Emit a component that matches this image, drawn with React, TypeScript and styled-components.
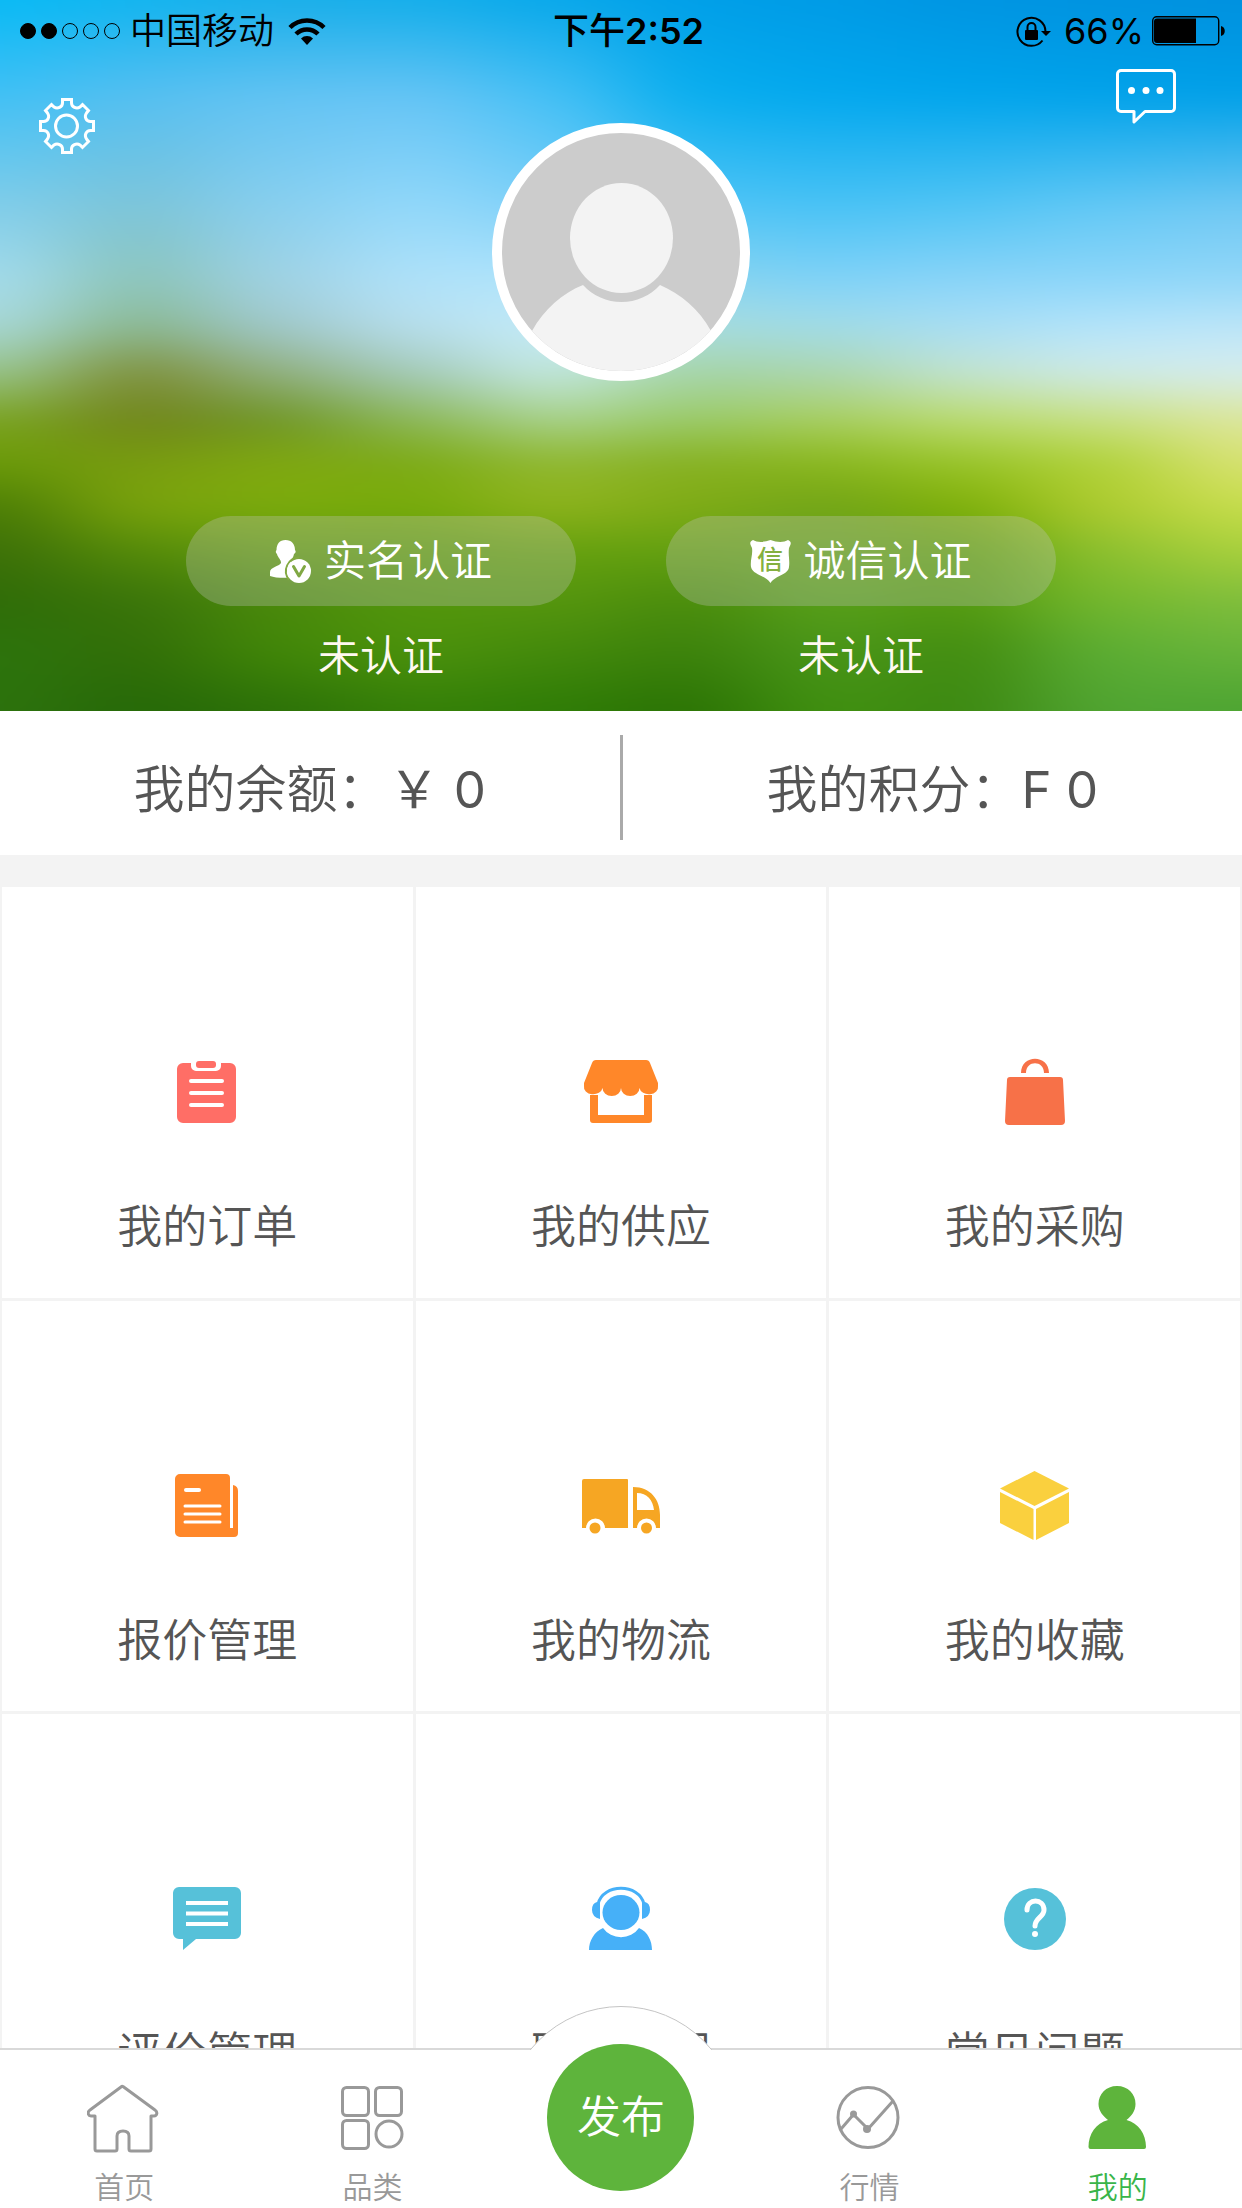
import React from "react";
import styled, { createGlobalStyle } from "styled-components";

const GlobalStyle = createGlobalStyle`
  *, *::before, *::after { box-sizing: border-box; }
  html, body, #root { height: 100%; }
  body {
    margin: 0;
    background: #fff;
    font-family: Inter, "Noto Sans CJK SC", sans-serif;
    color: #555;
  }
  button { border: 0; padding: 0; background: none; font: inherit; color: inherit; cursor: pointer; }
  a { color: inherit; text-decoration: none; }
  svg { display: block; }
`;

const Screen = styled.div`
  height: 100%;
  display: flex;
  flex-direction: column;
`;

const Content = styled.main`
  flex: 1;
  min-height: 0;
  overflow-y: auto;
  scrollbar-width: none;
  background: #f3f3f3;
`;

/* ---------- hero ---------- */

const Hero = styled.header`
  position: relative;
  isolation: isolate;
  overflow: hidden;
  color: #fff;
  padding-bottom: 25px;
`;

const Backdrop = styled.svg`
  position: absolute;
  inset: 0;
  width: 100%;
  height: 100%;
  z-index: -1;
`;

const StatusBar = styled.div`
  display: grid;
  grid-template-columns: 1fr auto 1fr;
  align-items: center;
  height: 60px;
  padding: 2px 17px 0 20px;
  color: #000;
  font-size: 36px;
  line-height: 58px;
`;

const StatusGroup = styled.div<{ $end?: boolean }>`
  display: flex;
  align-items: center;
  justify-content: ${(p) => (p.$end ? "flex-end" : "flex-start")};
`;

const Signal = styled.div`
  display: flex;
  gap: 5px;
  margin-right: 10px;
`;

const SignalDot = styled.span<{ $on: boolean }>`
  width: 16px;
  height: 16px;
  border-radius: 50%;
  border: 1px solid #000;
  background: ${(p) => (p.$on ? "#000" : "transparent")};
`;

const Carrier = styled.span`
  margin-right: 14px;
  font-weight: 350;
`;

const Clock = styled.time`
  padding-left: 12px;
  font-weight: 500;
`;

const ClockDigits = styled.span`
  font-weight: 600;
`;

const Percent = styled.span`
  margin: 0 8px 0 13px;
`;

const TopRow = styled.div`
  display: grid;
  grid-template-columns: 1fr auto 1fr;
  align-items: start;
  padding: 9px 66px 0 39px;
`;

const IconButton = styled.button<{ $end?: boolean }>`
  justify-self: ${(p) => (p.$end ? "end" : "start")};
  margin-top: ${(p) => (p.$end ? 0 : 29)}px;
`;

const Avatar = styled.div`
  width: 258px;
  height: 258px;
  margin: 54px 0 0 27px;
  border: 10px solid #fff;
  border-radius: 50%;
  overflow: hidden;
  background: #ccc;
`;

const Badges = styled.div`
  display: flex;
  justify-content: center;
  gap: 90px;
  margin-top: 135px;
`;

const BadgeColumn = styled.div`
  display: flex;
  flex-direction: column;
  align-items: center;
  width: 390px;
  font-size: 42px;
  line-height: 60px;
  font-weight: 350;
`;

const BadgeButton = styled.button`
  display: flex;
  align-items: center;
  justify-content: center;
  gap: 12px;
  width: 100%;
  height: 90px;
  margin-bottom: 20px;
  border-radius: 45px;
  background: rgba(200, 200, 200, 0.3);
`;

const BadgeState = styled.span`
  color: #fff9f0;
`;

/* ---------- balance ---------- */

const Balance = styled.section`
  display: flex;
  height: 144px;
  padding: 24px 0 15px;
  margin-bottom: 32px;
  background: #fff;
`;

const BalanceItem = styled.div`
  flex: 1;
  display: flex;
  align-items: center;
  justify-content: center;
  padding-bottom: 4px;
  font-size: 51px;
  font-weight: 350;
`;

const Amount = styled.span`
  font-weight: 400;
`;

const Divider = styled.div`
  width: 3px;
  background: #aaa;
`;

/* ---------- menu grid ---------- */

const Menu = styled.nav`
  display: grid;
  grid-template-columns: repeat(3, 1fr);
  gap: 3px;
  padding: 0 2px 3px;
`;

const MenuItem = styled.a`
  display: flex;
  flex-direction: column;
  align-items: center;
  gap: 58px;
  aspect-ratio: 1;
  padding-top: 160px;
  background: #fff;
  font-size: 45px;
  line-height: 64px;
  font-weight: 350;
`;

/* ---------- tab bar ---------- */

const TabBar = styled.nav`
  position: relative;
  display: grid;
  grid-template-columns: repeat(5, 1fr);
  height: 160px;
  border-top: 2px solid #d9d9d9;
  background: #fff;
`;

const Tab = styled.a<{ $active?: boolean }>`
  display: flex;
  flex-direction: column;
  align-items: center;
  gap: 11px;
  padding-top: 32px;
  font-size: 30px;
  line-height: 44px;
  font-weight: 350;
  color: ${(p) => (p.$active ? "#39b549" : "#999")};
`;

const BumpClip = styled.div`
  position: absolute;
  left: 50%;
  bottom: 100%;
  width: 234px;
  height: 44px;
  margin-left: -117px;
  overflow: hidden;
`;

const Bump = styled.div`
  width: 234px;
  height: 234px;
  border: 1px solid #c4c4c4;
  border-radius: 50%;
  background: #fff;
`;

const PublishSlot = styled.div`
  display: flex;
  justify-content: center;
`;

const Publish = styled.button`
  position: relative;
  z-index: 1;
  width: 147px;
  height: 147px;
  margin-top: -6px;
  padding-bottom: 8px;
  border-radius: 50%;
  background: #5eb43c;
  color: #fff;
  font-size: 44px;
  font-weight: 350;
`;

/* ---------- backdrop data: one vertical colour ramp for each column ---------- */

const stopsY = [0, 95, 205, 280, 326, 372, 420, 462, 505, 552, 600, 650, 711];

const ramps = [
  "08baf5 40c0f5 80cdea a5dcec a8d8d8 98c48c 7aa31e 6c9c08 4c7e06 3c7008 2f6c08 2c740c 2d720d",
  "12b4ef 55bff1 7cc4d8 8cc4b8 8ab890 7f8f3a 70841a 789c10 7ca40c 548a0a 3a740a 326e08 256808",
  "19aee9 62c3f3 88cfef a0d2e4 a0c8cc 92b080 6d9424 80a810 7cac0c 5f9a0c 4a880c 428808 2b7008",
  "14aeea 66c4f5 92d8fa b0e2fa b8dfee a4cabc 8cb858 7caa14 78ac0a 5e9c0c 52960c 4c920c 347f08",
  "08a8ea 45c0f5 7fd0f8 b0e4fa c5ecfa c5e9e4 a8d28c 90b830 90b41c 64a00e 56960e 448a0c 2e7c06",
  "009fe8 08aeee 50c4f6 88d4ee a8dce0 a5d4a8 9acb68 86b020 80ac16 62a010 4a8c0c 3c820c 2a7204",
  "009be6 02a8ee 48c2f5 80d2f8 a2dce8 acd6b0 a9cf60 8ab81c 72a418 66a41a 58a01a 4a961a 409010",
  "0095e2 00a5ec 50c4f4 8ad4f8 a8def5 c4e4d4 bcdc70 98c428 80b008 5ea00a 549a10 428c10 3c8812",
  "0093e0 00a2ea 62c8f5 8dd6f9 b4e4fb d0ebea c8e084 b0d238 b0cc30 8cc030 74b82e 5cae34 50a432",
  "0091df 00a0e8 70c8f3 92d7f8 bce5f8 d6edf0 dde69a d8e272 c8de4c a8d03c 80be3c 68b43a 4ca432",
].map((r) => r.split(" "));

const HeroBackdrop = () => (
  <Backdrop viewBox="0 0 1242 711" preserveAspectRatio="none" aria-hidden="true">
    <defs>
      {ramps.map((ramp, i) => (
        <linearGradient key={i} id={`ramp${i}`} gradientUnits="userSpaceOnUse" x1="0" y1="0" x2="0" y2="711">
          {ramp.map((c, j) => (
            <stop key={j} offset={stopsY[j] / 711} stopColor={`#${c}`} />
          ))}
        </linearGradient>
      ))}
      <filter id="soften" filterUnits="userSpaceOnUse" x="-400" y="-80" width="2042" height="871" colorInterpolationFilters="sRGB">
        <feGaussianBlur stdDeviation="52 16" />
      </filter>
    </defs>
    <g filter="url(#soften)">
      {ramps.map((_, i) => {
        const last = ramps.length - 1;
        const x = i === 0 ? -400 : i * 138 - 69;
        const end = i === last ? 1642 : i * 138 + 70;
        return <rect key={i} x={x} y="-80" width={end - x} height="871" fill={`url(#ramp${i})`} />;
      })}
    </g>
  </Backdrop>
);

/* ---------- icons ---------- */

const WifiIcon = () => (
  <svg width="38" height="28" viewBox="0 0 38 28" aria-hidden="true">
    <path d="M2 10.500a24 24 0 0 1 34 0" fill="none" stroke="#000" strokeWidth="4.500" />
    <path d="M8 17a15.500 15.500 0 0 1 22 0" fill="none" stroke="#000" strokeWidth="4.500" />
    <path d="M19 28l-6-6.500a8.500 8.500 0 0 1 12 0z" />
  </svg>
);

const RotationLockIcon = () => (
  <svg width="35" height="31" viewBox="0 0 35 31" aria-hidden="true">
    <path d="M26.500 24.500A14 14 0 1 1 29.500 15.500" fill="none" stroke="#000" strokeWidth="2" />
    <path d="M25 15h10l-5 5z" />
    <rect x="9" y="14" width="13" height="10" rx="1" />
    <path d="M11.500 14v-3a4 4 0 0 1 8 0v3" fill="none" stroke="#000" strokeWidth="2" />
  </svg>
);

const BatteryIcon = () => (
  <svg width="73" height="30" viewBox="0 0 73 30" aria-hidden="true">
    <rect x="0.700" y="0.700" width="66" height="28" rx="4" fill="none" stroke="#000" strokeWidth="1.400" />
    <path d="M5 2.500h39v24.500H5a3 3 0 0 1-3-3v-18.500a3 3 0 0 1 3-3z" />
    <path d="M69 10c5 1 5 9 0 10z" />
  </svg>
);

const GearIcon = () => (
  <svg width="56" height="56" viewBox="0 0 56 56" fill="none" stroke="#fff" strokeWidth="3" aria-hidden="true">
    <circle cx="27.500" cy="28" r="11" />
    <path d="M23.500 1.500h9v3.500c0 4 5 6.500 8.500 4l2.500-2.500 6 6-2 2.500c-2.500 3.500-.5 8.500 4 8.500h3v9h-3c-4.500 0-6.500 5-4 8.500l2 2.500-6 6-2.500-2.500c-3.500-2.500-8.500 0-8.500 4v3.500h-9v-3.500c0-4-5-6.500-8.500-4l-2.500 2.500-6-6 2-2.500c2.500-3.500.5-8.500-4-8.500h-3v-9h3c4.500 0 6.500-5 4-8.500l-2-2.500 6-6 2.500 2.500c3.500 2.500 8.500 0 8.500-4z" />
  </svg>
);

const MessageIcon = () => (
  <svg width="60" height="55" viewBox="0 0 60 55" aria-hidden="true">
    <path d="M5 1.500h50a3.500 3.500 0 0 1 3.500 3.500v34a3.500 3.500 0 0 1-3.500 3.500H29l-11 10.500v-10.500H5a3.500 3.500 0 0 1-3.500-3.500V5a3.500 3.500 0 0 1 3.500-3.500z" fill="none" stroke="#fff" strokeWidth="3" strokeLinejoin="round" />
    <g fill="#fff"><circle cx="15.500" cy="21.500" r="3.500" /><circle cx="30" cy="21.500" r="3.500" /><circle cx="44" cy="21.500" r="3.500" /></g>
  </svg>
);

const AvatarFigure = () => (
  <svg width="238" height="238" viewBox="0 0 238 238" role="img" aria-label="头像">
    <path d="M30 198C42 176 61 160 81 152a52 52 0 0 0 77 0c21 9 39 24 51 46v40H30z" fill="#f3f3f3" />
    <ellipse cx="119.500" cy="105" rx="51.500" ry="55" fill="#f3f3f3" />
  </svg>
);

const VerifiedUserIcon = () => (
  <svg width="42" height="43" viewBox="0 0 42 43" aria-hidden="true">
    <path d="M15.500 0c6 0 9.500 4 9.500 10 1 1 1 3-1 4-.5 3-2.500 5.500-3 7-.5 4 .5 6 3 7v9.500C14 38 5 38 0 36v-4c0-5 9-5.500 11-9 .5-3-3.500-6-4-9-1.500-1-1.500-3-.5-4C6.500 4 9.500 0 15.500 0z" fill="#fff" />
    <path d="M29 17.500a13.500 13.500 0 0 0-10 22" fill="none" stroke="#84aa42" strokeWidth="2" />
    <circle cx="29" cy="31" r="12" fill="#fff" />
    <path d="M23.500 26.500l5.500 9.500 5.500-9.500" fill="none" stroke="#80a843" strokeWidth="3" strokeLinecap="round" strokeLinejoin="round" />
  </svg>
);

const Seal = styled.text`
  font-family: "Noto Sans CJK SC", sans-serif;
  font-size: 26px;
  font-weight: 500;
`;

const ShieldIcon = () => (
  <svg width="41" height="43" viewBox="0 0 41 43" aria-hidden="true">
    <path d="M3 0c4 2.500 11 2.500 17.500 0C27 2.500 34 2.500 38 0c4 2 3 4 1 8-1 7 1 12 0 19-1 8-13 8-18.500 16C15 35 3 35 1 27c-1-7 2-12 1-19C0 4-1 2 3 0z" fill="#fff" />
    <Seal x="20" y="29" textAnchor="middle" fill="#84b03f">信</Seal>
  </svg>
);

const MenuSvg = ({ color, children }: { color: string; children: React.ReactNode }) => (
  <svg width="90" height="90" viewBox="0 0 90 90" fill={color} aria-hidden="true">
    {children}
  </svg>
);

const OrderIcon = () => (
  <MenuSvg color="#ff6e66">
    <path d="M21 16h8v3a5 5 0 0 0 5 5h20a5 5 0 0 0 5-5v-3h9a6 6 0 0 1 6 6v48a6 6 0 0 1-6 6H21a6 6 0 0 1-6-6V22a6 6 0 0 1 6-6z" />
    <rect x="34" y="14" width="20" height="7" rx="3" />
    <path d="M29 34h31M29 46h31M29 58h31" stroke="#fff" strokeWidth="4" strokeLinecap="round" />
  </MenuSvg>
);

const ShopIcon = () => (
  <MenuSvg color="#ff8729">
    <path d="M20 13h50q3 0 4 3l8 20v3a9 7 0 0 1-18.500 2 9.250 8 0 0 1-18.500 0 9.250 8 0 0 1-18.500 0 9 7 0 0 1-18.500-2v-3l8-20q1-3 4-3z" />
    <path d="M14 48h8v20h46V48h8v25a3 3 0 0 1-3 3H17a3 3 0 0 1-3-3z" />
  </MenuSvg>
);

const BagIcon = () => (
  <MenuSvg color="#f77148">
    <path d="M20 30h50a3 3 0 0 1 3 3l2 41q0 4-4 4H19q-4 0-4-4l2-41a3 3 0 0 1 3-3z" />
    <path d="M31 26C31 7 59 7 59 26h-5c0-13-18-13-18 0z" />
  </MenuSvg>
);

const QuoteIcon = () => (
  <MenuSvg color="#ff8729">
    <path d="M18 13h46a4 4 0 0 1 4 4v50h3V24q5 1 5 6v42a4 4 0 0 1-4 4H18a5 5 0 0 1-5-5V18a5 5 0 0 1 5-5z" />
    <path d="M24 29h13" stroke="#fff" strokeWidth="4" strokeLinecap="round" />
    <path d="M23 45h35M23 53h35M23 61h35" stroke="#fff" strokeWidth="3" strokeLinecap="round" />
  </MenuSvg>
);

const TruckIcon = () => (
  <MenuSvg color="#f6a623">
    <path d="M8 18h43q1 0 1 1v48H29a9.500 9.500 0 0 0-19 0H6V20q0-2 2-2z" />
    <path fillRule="evenodd" d="M57 26c18 0 27 13 27 28v13h-4a9.500 9.500 0 0 0-19 0h-4zM61 32v17h17c-1-10-7-17-17-17z" />
    <circle cx="19" cy="67" r="5.500" />
    <circle cx="70.500" cy="67" r="5.500" />
  </MenuSvg>
);

const BoxIcon = () => (
  <MenuSvg color="#fad03e">
    <path d="M44.500 10L79 27.500 44.500 45 10 27.500z" />
    <path d="M10 31l33.500 17v31L10 62zM79 31L46 48v31l33-17z" />
  </MenuSvg>
);

const CommentIcon = () => (
  <MenuSvg color="#56c1d9">
    <path d="M17 13h56a6 6 0 0 1 6 6v40a6 6 0 0 1-6 6H34L21 76V65h-4a6 6 0 0 1-6-6V19a6 6 0 0 1 6-6z" />
    <path d="M24 29h42M24 39.500h42M24 50h42" stroke="#fff" strokeWidth="4" />
  </MenuSvg>
);

const ServiceIcon = () => (
  <MenuSvg color="#46b0f8">
    <path d="M13 76c0-9 5-18 14-22a22 22 0 0 0 36 0c9 4 13 13 13 22z" />
    <ellipse cx="45" cy="38.500" rx="18.500" ry="17.500" />
    <path d="M22 30C27 9 63 9 68 30" fill="none" stroke="#46b0f8" strokeWidth="3" />
    <path d="M24 28v17q-8-2-8-9t5-8zM66 28v17q8-2 8-9t-5-8z" />
  </MenuSvg>
);

const HelpIcon = () => (
  <MenuSvg color="#56c1d9">
    <circle cx="45" cy="45" r="31" />
    <path d="M37 36c0-12 17-12 17 0 0 7-9 8-9 16" fill="none" stroke="#fff" strokeWidth="5" strokeLinecap="round" />
    <circle cx="45" cy="60" r="3" fill="#fff" />
  </MenuSvg>
);

const TabSvg = ({ children }: { children: React.ReactNode }) => (
  <svg width="74" height="72" viewBox="1 0 74 72" fill="none" stroke="currentColor" strokeWidth="3" strokeLinejoin="round" aria-hidden="true">
    {children}
  </svg>
);

const HomeIcon = () => (
  <TabSvg>
    <path d="M37 4.500L69 28c3 2 2 6-1 6h-3v33q0 2-2 2H45q-2 0-2-2V54q0-5-6-5t-6 5v13q0 2-2 2H11q-2 0-2-2V34H5c-3 0-4-4-1-6L35 5q1-1 2-.5z" />
  </TabSvg>
);

const CategoryIcon = () => (
  <TabSvg>
    <rect x="7.500" y="5.500" width="26" height="28" rx="4" />
    <rect x="40.500" y="5.500" width="26" height="28" rx="4" />
    <rect x="7.500" y="38.500" width="26" height="28" rx="4" />
    <circle cx="54" cy="52" r="13" />
  </TabSvg>
);

const TrendIcon = () => (
  <TabSvg>
    <circle cx="37" cy="35.500" r="30" />
    <path d="M10 47l12.500-14.500L37 47l25-28" />
    <circle cx="22.500" cy="32" r="3.500" fill="currentColor" stroke="none" />
    <circle cx="36" cy="47" r="4" fill="currentColor" stroke="none" />
  </TabSvg>
);

const PersonIcon = () => (
  <TabSvg>
    <path d="M37 4c11 0 18.500 8 18.500 18 0 7-4 12-9 16 12 3 19.500 14 19.500 27q0 2-2 2H10.500q-2 0-2-2C8.500 52 16 41 28 38c-5-4-9.500-9-9.500-16C18.500 12 26 4 37 4z" fill="#5eb43c" stroke="none" />
  </TabSvg>
);

/* ---------- data ---------- */

const menu = [
  { label: "我的订单", Icon: OrderIcon },
  { label: "我的供应", Icon: ShopIcon },
  { label: "我的采购", Icon: BagIcon },
  { label: "报价管理", Icon: QuoteIcon },
  { label: "我的物流", Icon: TruckIcon },
  { label: "我的收藏", Icon: BoxIcon },
  { label: "评价管理", Icon: CommentIcon },
  { label: "联系客服", Icon: ServiceIcon },
  { label: "常见问题", Icon: HelpIcon },
];

const badges = [
  { label: "实名认证", state: "未认证", Icon: VerifiedUserIcon },
  { label: "诚信认证", state: "未认证", Icon: ShieldIcon },
];

export default function App() {
  return (
    <Screen>
      <GlobalStyle />
      <Content>
        <Hero>
          <HeroBackdrop />
          <StatusBar>
            <StatusGroup>
              <Signal>
                {[true, true, false, false, false].map((on, i) => (
                  <SignalDot key={i} $on={on} />
                ))}
              </Signal>
              <Carrier>中国移动</Carrier>
              <WifiIcon />
            </StatusGroup>
            <Clock>下午<ClockDigits>2:52</ClockDigits></Clock>
            <StatusGroup $end>
              <RotationLockIcon />
              <Percent>66%</Percent>
              <BatteryIcon />
            </StatusGroup>
          </StatusBar>
          <TopRow>
            <IconButton type="button" aria-label="设置"><GearIcon /></IconButton>
            <Avatar><AvatarFigure /></Avatar>
            <IconButton type="button" aria-label="消息" $end><MessageIcon /></IconButton>
          </TopRow>
          <Badges>
            {badges.map(({ label, state, Icon }) => (
              <BadgeColumn key={label}>
                <BadgeButton type="button"><Icon />{label}</BadgeButton>
                <BadgeState>{state}</BadgeState>
              </BadgeColumn>
            ))}
          </Badges>
        </Hero>

        <Balance>
          <BalanceItem>
            <span>我的余额：<Amount>￥ 0</Amount></span>
          </BalanceItem>
          <Divider />
          <BalanceItem>
            <span>我的积分：<Amount>F 0</Amount></span>
          </BalanceItem>
        </Balance>

        <Menu>
          {menu.map(({ label, Icon }) => (
            <MenuItem key={label} href="#">
              <Icon />
              {label}
            </MenuItem>
          ))}
        </Menu>
      </Content>

      <TabBar>
        <BumpClip><Bump /></BumpClip>
        <Tab href="#"><HomeIcon />首页</Tab>
        <Tab href="#"><CategoryIcon />品类</Tab>
        <PublishSlot><Publish type="button">发布</Publish></PublishSlot>
        <Tab href="#"><TrendIcon />行情</Tab>
        <Tab href="#" $active><PersonIcon />我的</Tab>
      </TabBar>
    </Screen>
  );
}
